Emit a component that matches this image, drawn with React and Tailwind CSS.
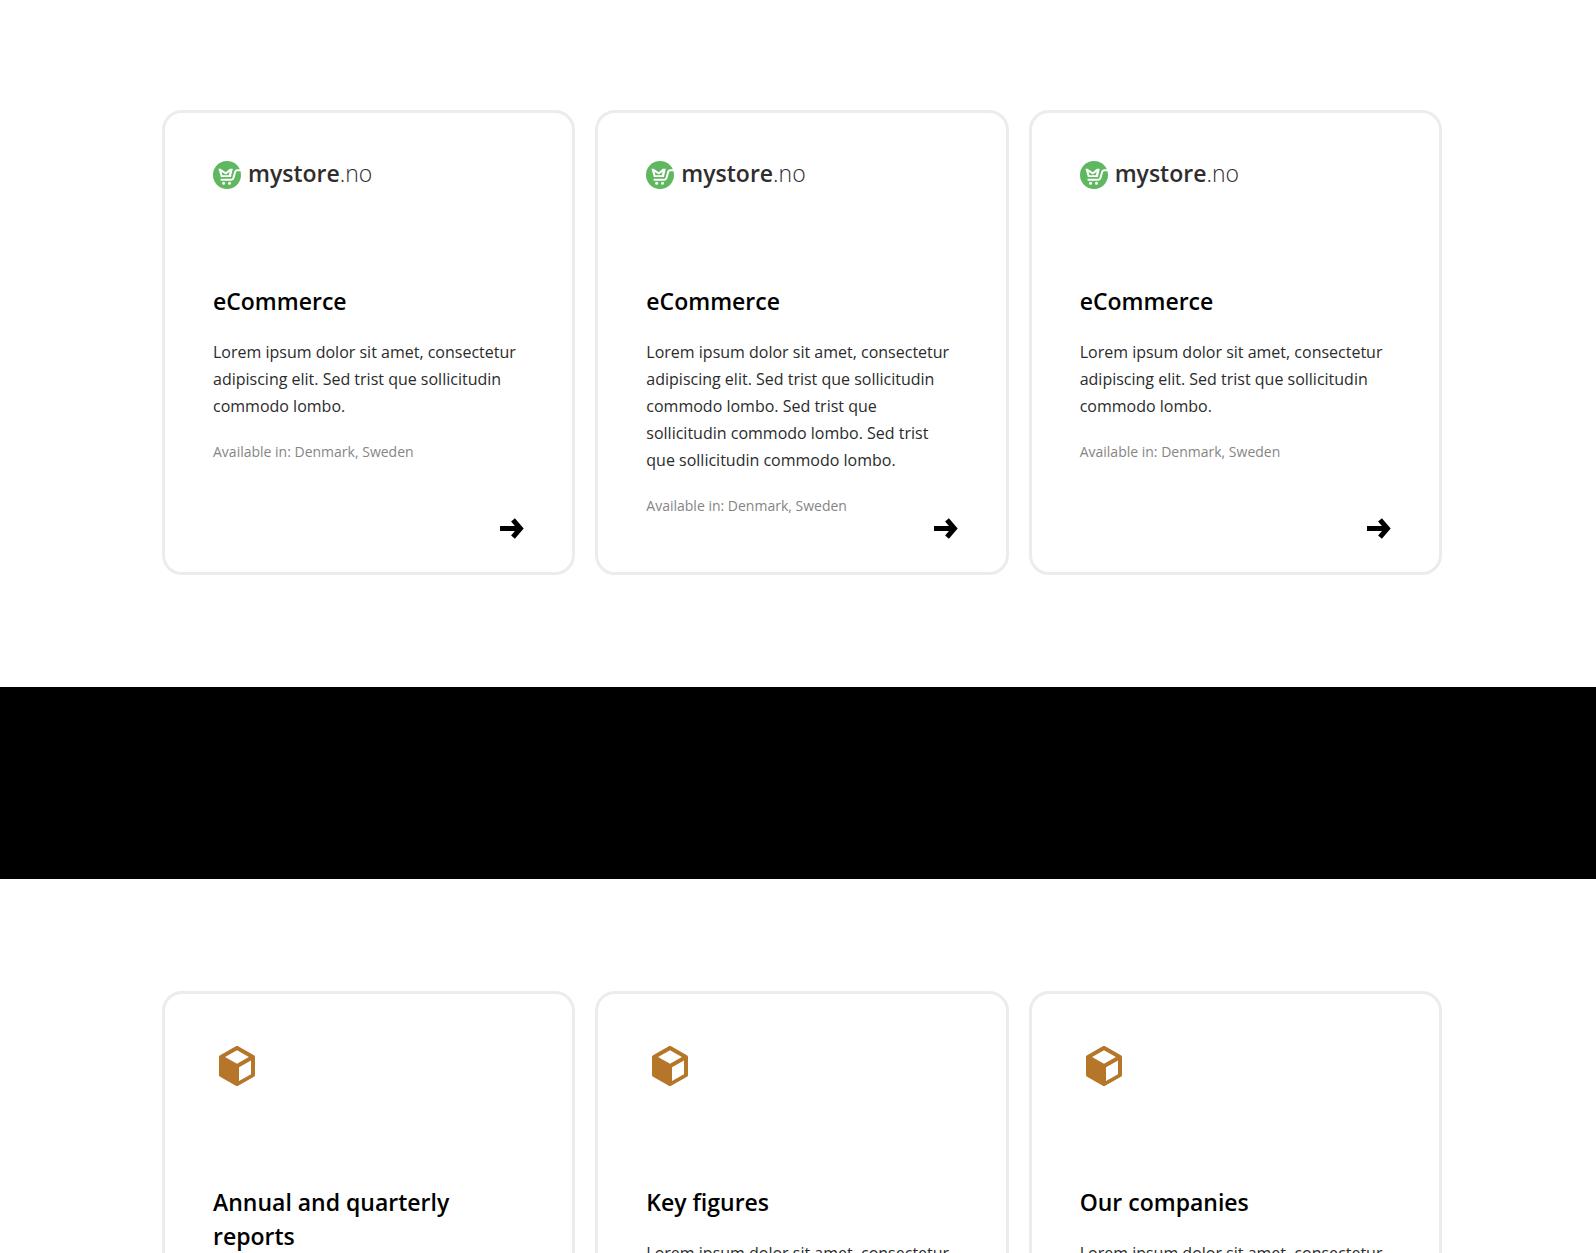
import React from 'react';

const LOREM = 'Lorem ipsum dolor sit amet, consectetur adipiscing elit. Sed trist que sollicitudin commodo lombo.';
const LOREM_LONG = `${LOREM} Sed trist que sollicitudin commodo lombo. Sed trist que sollicitudin commodo lombo.`;

const products = [
  { id: 1, title: 'eCommerce', text: LOREM, available: 'Denmark, Sweden' },
  { id: 2, title: 'eCommerce', text: LOREM_LONG, available: 'Denmark, Sweden' },
  { id: 3, title: 'eCommerce', text: LOREM, available: 'Denmark, Sweden' },
];

const investorLinks = [
  { id: 'reports', title: 'Annual and quarterly reports', text: LOREM },
  { id: 'figures', title: 'Key figures', text: LOREM },
  { id: 'companies', title: 'Our companies', text: LOREM },
];

const StoreLogo = () => (
  <div className="flex h-7 items-center gap-[7px] text-[#2f2d2e]">
    <svg className="h-7 w-7 shrink-0" viewBox="0 0 28 28" fill="none" aria-hidden="true">
      <circle cx="14" cy="14" r="14" fill="#5fb760" />
      <path
        d="M28 9.2h-3.6c-1.3 0-1.9.5-2.2 1.6l-1.7 6c-.4 1.4-.9 1.9-2.2 1.9H7.6"
        stroke="#fff"
        strokeWidth="2"
      />
      <path d="M5.4 7.8h2.2l5.2 3.4 4-3.4h3l-1.9 8.2H7.9z" fill="#fff" />
      <path d="m8.6 10.9 4.3 2.5 3.8-2.7-1 3.6H9.4z" fill="#5fb760" />
      <circle cx="10.6" cy="22.3" r="1.5" fill="#fff" />
      <circle cx="16.5" cy="22.3" r="1.5" fill="#fff" />
    </svg>
    <span className="pb-1 text-[23px] leading-7 font-semibold">
      mystore<span className="font-light">.no</span>
    </span>
  </div>
);

const CubeIcon = () => (
  <svg className="h-12 w-12" viewBox="0 0 24 24" fill="#b5762a" aria-hidden="true">
    <path d="M21 16.5c0 .38-.21.71-.53.88l-7.9 4.44c-.16.12-.36.18-.57.18s-.41-.06-.57-.18l-7.9-4.44A.99.99 0 0 1 3 16.5v-9c0-.38.21-.71.53-.88l7.9-4.44c.16-.12.36-.18.57-.18s.41.06.57.18l7.9 4.44c.32.17.53.5.53.88v9M12 4.15 6.04 7.5 12 10.85l5.96-3.35L12 4.15m1 15.36 6-3.38V9.21l-6 3.37z" />
  </svg>
);

const ArrowIcon = () => (
  <svg className="h-[22px] w-6" viewBox="0 0 24 22" fill="none" stroke="#000" strokeWidth="5" aria-hidden="true">
    <path d="M0 10.5h20" />
    <path d="m13 1.9 7.4 8.6-7.4 8.6" />
  </svg>
);

const Card = ({ logo, title, text, available, href }) => (
  <article className="relative rounded-[20px] border-[3px] border-[#ececec] px-12 pt-12 pb-[54px]">
    {logo}
    <h2 className="mt-[95px] text-[23px] leading-[34px] font-semibold text-black">{title}</h2>
    <p className="mt-[21px] text-base leading-[27px] text-[#2b2b2b]">{text}</p>
    {available && (
      <p className="mt-5 text-sm leading-6 text-[#858585]">Available in: {available}</p>
    )}
    <a href={href} aria-label={title} className="absolute right-12 bottom-8">
      <ArrowIcon />
    </a>
  </article>
);

const CardGrid = ({ children }) => (
  <div className="mx-auto grid max-w-[1280px] grid-cols-3 gap-5">{children}</div>
);

const App = () => {
  return (
    <main className="h-screen overflow-hidden bg-white font-['Open_Sans',sans-serif]">
      <section className="pt-[110px] pr-5 pb-28 pl-7">
        <CardGrid>
          {products.map((product) => (
            <Card key={product.id} {...product} href="#product" logo={<StoreLogo />} />
          ))}
        </CardGrid>
      </section>

      <div className="h-48 bg-black" />

      <section className="py-28 pr-5 pl-7">
        <CardGrid>
          {investorLinks.map((item) => (
            <Card key={item.id} {...item} href={`#${item.id}`} logo={<CubeIcon />} />
          ))}
        </CardGrid>
      </section>
    </main>
  );
};

export default App;
